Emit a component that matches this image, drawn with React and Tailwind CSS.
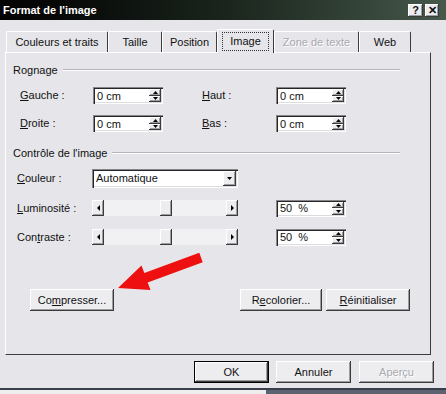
import React from 'react';

const raised =
  'bg-[#ededf0] shadow-[inset_-1px_-1px_0_#3a3a3a,inset_1px_1px_0_#ffffff,inset_-2px_-2px_0_#9c9ca2]';
const sunken =
  'bg-white shadow-[inset_1px_1px_0_#85858a,inset_2px_2px_0_#262626,inset_-1px_-1px_0_#ffffff,inset_-2px_-2px_0_#dcdce0]';

const Arrow = ({ dir }) => {
  const flat = dir === 'up' || dir === 'down';
  const pts = {
    up: '0,3 5,3 2.5,0',
    down: '0,0 5,0 2.5,3',
    left: '3,0 3,6 0,3',
    right: '0,0 0,6 3,3',
  }[dir];
  return (
    <svg width={flat ? 5 : 3} height={flat ? 3 : 6} viewBox={flat ? '0 0 5 3' : '0 0 3 6'}>
      <polygon points={pts} fill="#000" />
    </svg>
  );
};

const Spin = ({ value }) => (
  <div className={`flex h-[17px] w-[70px] items-center pl-[4px] pr-[2px] ${sunken}`}>
    <span className="flex-1 whitespace-pre pt-px">{value}</span>
    <div className="flex h-[13px] w-[12px] flex-col">
      <div className={`flex flex-1 items-center justify-center ${raised}`}>
        <Arrow dir="up" />
      </div>
      <div className={`flex flex-1 items-center justify-center ${raised}`}>
        <Arrow dir="down" />
      </div>
    </div>
  </div>
);

const Slider = () => (
  <div className="flex h-[16px] w-[146px] bg-[#f1f1f3]">
    <div className={`flex w-[12px] items-center justify-center ${raised}`}>
      <Arrow dir="left" />
    </div>
    <div className="flex-1">
      <div className={`ml-[56px] h-full w-[12px] ${raised}`} />
    </div>
    <div className={`flex w-[12px] items-center justify-center ${raised}`}>
      <Arrow dir="right" />
    </div>
  </div>
);

const Group = ({ title }) => (
  <div className="flex h-[14px] items-center pl-[7px] pr-[30px]">
    <span>{title}</span>
    <div className="ml-[5px] flex-1 border-t border-b border-t-[#b4b4ba] border-b-white" />
  </div>
);

const Button = ({ children, className = '' }) => (
  <div className={`flex h-[22px] items-center justify-center ${raised} ${className}`}>{children}</div>
);

const tabs = [
  { label: 'Couleurs et traits', w: 'w-[102px]' },
  { label: 'Taille', w: 'w-[54px]' },
  { label: 'Position', w: 'w-[55px]' },
  { label: 'Image', w: 'w-[57px]', active: true },
  { label: 'Zone de texte', w: 'w-[85px]', disabled: true },
  { label: 'Web', w: 'w-[52px]' },
];

export default function App() {
  return (
    <div className="relative flex h-[394px] w-[446px] flex-col overflow-hidden bg-[#e6e6ea] font-['Liberation_Sans',Arial,sans-serif] text-[11px] leading-none text-[#111]">
      {/* title bar */}
      <div className="flex h-[20px] shrink-0 items-center justify-between bg-gradient-to-r from-[#030303] via-[#1a241c] to-[#46594b] pl-[3px] pr-[7px]">
        <span className="font-bold text-white">Format de l'image</span>
        <div className="flex gap-[2px]">
          <div className={`flex h-[13px] w-[15px] items-center justify-center text-[11px] font-bold ${raised}`}>?</div>
          <div className={`flex h-[13px] w-[14px] items-center justify-center text-[11px] font-bold ${raised}`}>✕</div>
        </div>
      </div>

      {/* tabs */}
      <div className="mt-[11px] flex h-[21px] shrink-0 pl-[6px]">
        {tabs.map((t) => (
          <div
            key={t.label}
            className={`flex ${t.w} items-center justify-center rounded-t-[2px] border-t border-l border-r border-t-white border-l-white border-r-[#3c3c3c] ${
              t.active ? 'relative z-10 -mt-[2px] h-[24px] bg-[#e6e6ea]' : 'h-[21px]'
            }`}
          >
            {t.active ? (
              <span className="border border-dotted border-[#333] px-[7px] py-[3px]">{t.label}</span>
            ) : (
              <span className={t.disabled ? 'text-[#a9a9ae] [text-shadow:1px_1px_0_#fff]' : ''}>{t.label}</span>
            )}
          </div>
        ))}
      </div>

      {/* panel */}
      <div className="ml-[5px] flex h-[303px] w-[426px] shrink-0 flex-col border-t border-l border-r border-b border-t-white border-l-white border-r-[#3c3c3c] border-b-[#3c3c3c]">
        <div className="mt-[10px]">
          <Group title="Rognage" />
        </div>

        <div className="mt-[10px] flex items-center pl-[14px]">
          <span className="w-[73px]">
            <u>G</u>auche :
          </span>
          <Spin value="0 cm" />
          <span className="ml-[39px] w-[74px]">
            <u>H</u>aut :
          </span>
          <Spin value="0 cm" />
        </div>
        <div className="mt-[11px] flex items-center pl-[14px]">
          <span className="w-[73px]">
            <u>D</u>roite :
          </span>
          <Spin value="0 cm" />
          <span className="ml-[39px] w-[74px]">
            <u>B</u>as :
          </span>
          <Spin value="0 cm" />
        </div>

        <div className="mt-[14px]">
          <Group title="Contrôle de l'image" />
        </div>

        <div className="mt-[9px] flex items-center pl-[11px]">
          <span className="w-[75px]">
            <u>C</u>ouleur :
          </span>
          <div className={`flex h-[19px] w-[146px] items-center pl-[4px] pr-[2px] ${sunken}`}>
            <span className="flex-1">Automatique</span>
            <div className={`flex h-[15px] w-[13px] items-center justify-center ${raised}`}>
              <Arrow dir="down" />
            </div>
          </div>
        </div>

        <div className="mt-[11px] flex h-[18px] items-center pl-[11px]">
          <span className="w-[75px]">
            <u>L</u>uminosité :
          </span>
          <Slider />
          <div className="ml-[38px]">
            <Spin value="50  %" />
          </div>
        </div>
        <div className="mt-[11px] flex h-[18px] items-center pl-[11px]">
          <span className="w-[75px]">
            Con<u>t</u>raste :
          </span>
          <Slider />
          <div className="ml-[38px]">
            <Spin value="50  %" />
          </div>
        </div>

        <div className="mt-[43px] flex items-center pl-[24px]">
          <Button className="w-[84px]">
            <span>
              Co<u>m</u>presser...
            </span>
          </Button>
          <Button className="ml-[126px] w-[82px]">
            <span>
              R<u>e</u>colorier...
            </span>
          </Button>
          <Button className="ml-[4px] w-[84px]">
            <span>
              <u>R</u>éinitialiser
            </span>
          </Button>
        </div>
      </div>

      {/* dialog buttons */}
      <div className="mt-[6px] flex shrink-0 justify-end gap-[7px] pr-[12px]">
        <div className="h-[22px] w-[75px] border border-black">
          <Button className="h-full w-full">OK</Button>
        </div>
        <Button className="w-[75px]">Annuler</Button>
        <Button className="ml-px w-[75px]">
          <span className="text-[#a9a9ae] [text-shadow:1px_1px_0_#fff]">Aperçu</span>
        </Button>
      </div>

      <div className="mt-[5px] h-[2px] shrink-0 bg-[#39404c]" />
      <div className="flex flex-1">
        <div className="w-[266px] bg-[#eeeeee]" />
        <div className="flex-1 bg-[#5b6270]" />
      </div>

      {/* red pointer arrow */}
      <svg className="pointer-events-none absolute inset-0" width="446" height="394" viewBox="0 0 446 394">
        <polygon
          points="118,288 141.5,265.5 144.3,273 199.3,252.8 202.7,262.2 147.7,282.4 150.5,289.9"
          fill="#ee1010"
        />
      </svg>
    </div>
  );
}
